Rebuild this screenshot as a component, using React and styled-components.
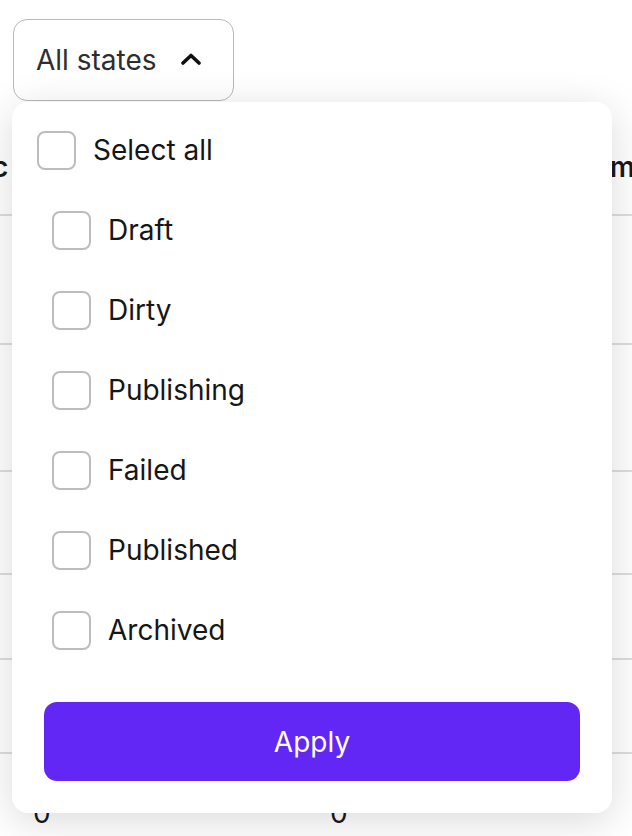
import styled, { createGlobalStyle } from "styled-components";

const GlobalStyle = createGlobalStyle`
	body {
		margin: 0;
		background: #ffffff;
		font-family: Inter, "Noto Sans", sans-serif;
		color: #1a1a1a;
	}
`;

const states = ["Draft", "Dirty", "Publishing", "Failed", "Published", "Archived"];

const rows = [
	{ height: 129, cells: [] },
	{ height: 127, cells: [] },
	{ height: 103, cells: [] },
	{ height: 85, cells: [] },
	{ height: 94, cells: [] },
	{ height: 84, cells: ["0", "0"] },
];

const Chevron = () => (
	<svg width="20" height="12" viewBox="0 0 20 12" fill="none">
		<polyline
			points="2,10 10,2.5 18,10"
			stroke="#111"
			strokeWidth="3.6"
			strokeLinecap="round"
			strokeLinejoin="round"
		/>
	</svg>
);

const App = () => {
	return (
		<Page>
			<GlobalStyle />
			<Filter>
				<Trigger>
					<span>All states</span>
					<Chevron />
				</Trigger>

				<Popover>
					<Option>
						<Box />
						<span>Select all</span>
					</Option>
					{states.map((state) => (
						<Option key={state} nested>
							<Box />
							<span>{state}</span>
						</Option>
					))}
					<ApplyButton>Apply</ApplyButton>
				</Popover>
			</Filter>

			<Table>
				<HeaderRow>
					<span>c</span>
					<span>m</span>
				</HeaderRow>
				{rows.map((row, i) => (
					<Row key={i} height={row.height}>
						{row.cells.map((cell, j) => (
							<span key={j}>{cell}</span>
						))}
					</Row>
				))}
			</Table>
		</Page>
	);
};

export default App;

const Page = styled.div`
	width: 632px;
	height: 836px;
	overflow: hidden;
	background: #ffffff;
`;

const Filter = styled.div`
	position: relative;
	padding: 19px 0 0 13px;
	z-index: 2;
`;

const Trigger = styled.button`
	display: flex;
	align-items: center;
	gap: 24px;
	height: 82px;
	width: 221px;
	padding: 0 0 0 22px;
	box-sizing: border-box;
	border: 1.5px solid #b9b9b9;
	border-radius: 14px;
	background: #ffffff;
	font-family: Inter, sans-serif;
	font-size: 28px;
	color: #2e2e2e;
	cursor: pointer;

	svg {
		margin-top: -2px;
	}
`;

const Popover = styled.div`
	position: absolute;
	top: 102px;
	left: 12px;
	width: 600px;
	box-sizing: border-box;
	padding: 8px 0 32px;
	background: #ffffff;
	border-radius: 16px;
	box-shadow: 0 8px 40px rgba(0, 0, 0, 0.15);
	display: flex;
	flex-direction: column;
`;

const Option = styled.label`
	display: flex;
	align-items: center;
	gap: 17px;
	height: 80px;
	padding-left: ${(props) => (props.nested ? "40px" : "25px")};
	font-size: 28px;
	color: #161616;
	cursor: pointer;
`;

const Box = styled.span`
	width: 39px;
	height: 39px;
	box-sizing: border-box;
	border: 2px solid #bdbdbd;
	border-radius: 8px;
	background: #ffffff;
	flex-shrink: 0;
`;

const ApplyButton = styled.button`
	margin: 32px 32px 0;
	height: 79px;
	border: none;
	border-radius: 13px;
	background: #6226f5;
	color: #ffffff;
	font-family: Inter, sans-serif;
	font-size: 28px;
	cursor: pointer;
`;

const Table = styled.div`
	margin-top: 19px;
`;

const HeaderRow = styled.div`
	display: flex;
	justify-content: space-between;
	align-items: center;
	height: 94px;
	margin-left: -8px;
	margin-right: -3px;
	font-size: 28px;
	font-weight: 600;
	border-bottom: 2px solid #dddddd;
`;

const Row = styled.div`
	display: grid;
	grid-template-columns: 297px 1fr;
	align-items: end;
	height: ${(props) => props.height}px;
	box-sizing: border-box;
	padding: 0 0 8px 33px;
	border-bottom: 2px solid #dddddd;
	font-size: 28px;

	&:last-child {
		border-bottom: none;
	}
`;
